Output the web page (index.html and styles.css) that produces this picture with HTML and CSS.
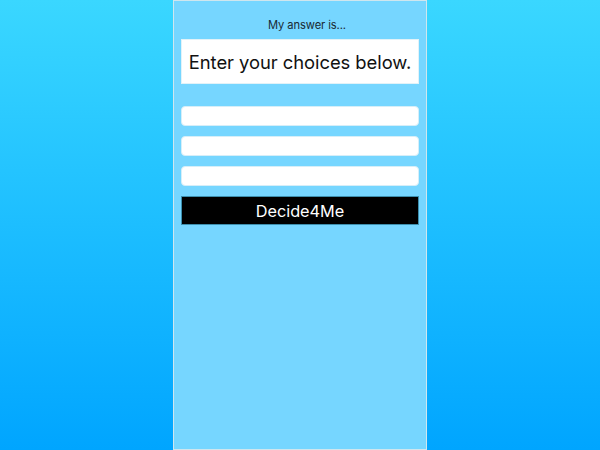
FILE: index.html
```html
<!DOCTYPE html>
<html>
<head>
<meta charset="utf-8">
<link rel="stylesheet" href="styles.css">
</head>
<body>
<div class="page">
  <main class="phone">
    <p class="label">My answer is...</p>
    <div class="answer">Enter your choices below.</div>
    <div class="choices">
      <input class="choice" type="text">
      <input class="choice" type="text">
      <input class="choice" type="text">
      <button class="decide">Decide4Me</button>
    </div>
  </main>
</div>
</body>
</html>
```
FILE: styles.css
```css
html, body {
  margin: 0;
  padding: 0;
  height: 100%;
}
body {
  background: linear-gradient(to bottom, #3ad7ff 0%, #00a5ff 100%);
  font-family: Inter, "Liberation Sans", sans-serif;
}
.page {
  display: flex;
  justify-content: center;
  height: 450px;
}
.phone {
  box-sizing: border-box;
  width: 254px;
  height: 450px;
  background: #76d6ff;
  border: 1px solid #cfe6ee;
  padding: 0 7px;
  display: flex;
  flex-direction: column;
  align-items: stretch;
}
.label {
  margin: 17px 0 0;
  padding-left: 14px;
  height: 14px;
  line-height: 14px;
  text-align: center;
  font-size: 11.2px;
  color: #1a2a33;
  letter-spacing: -0.1px;
}
.answer {
  margin-top: 7px;
  height: 45px;
  background: #fff;
  border: 1px solid #e2f2f8;
  box-sizing: border-box;
  display: flex;
  align-items: center;
  justify-content: center;
  font-size: 18.4px;
  color: #111;
  letter-spacing: -0.05px;
}
.choices {
  margin-top: 22px;
  display: flex;
  flex-direction: column;
  gap: 10px;
}
.choice {
  box-sizing: border-box;
  height: 20px;
  margin: 0;
  border: 1px solid #d6eef8;
  border-radius: 4px;
  background: #fff;
  padding: 0 4px;
  outline: none;
}
.decide {
  margin-top: 0;
  box-sizing: border-box;
  height: 29px;
  background: #000;
  color: #fff;
  border: 1px solid #3d8fae;
  font-family: Inter, "Liberation Sans", sans-serif;
  font-size: 16.3px;
  padding: 0;
}
```
